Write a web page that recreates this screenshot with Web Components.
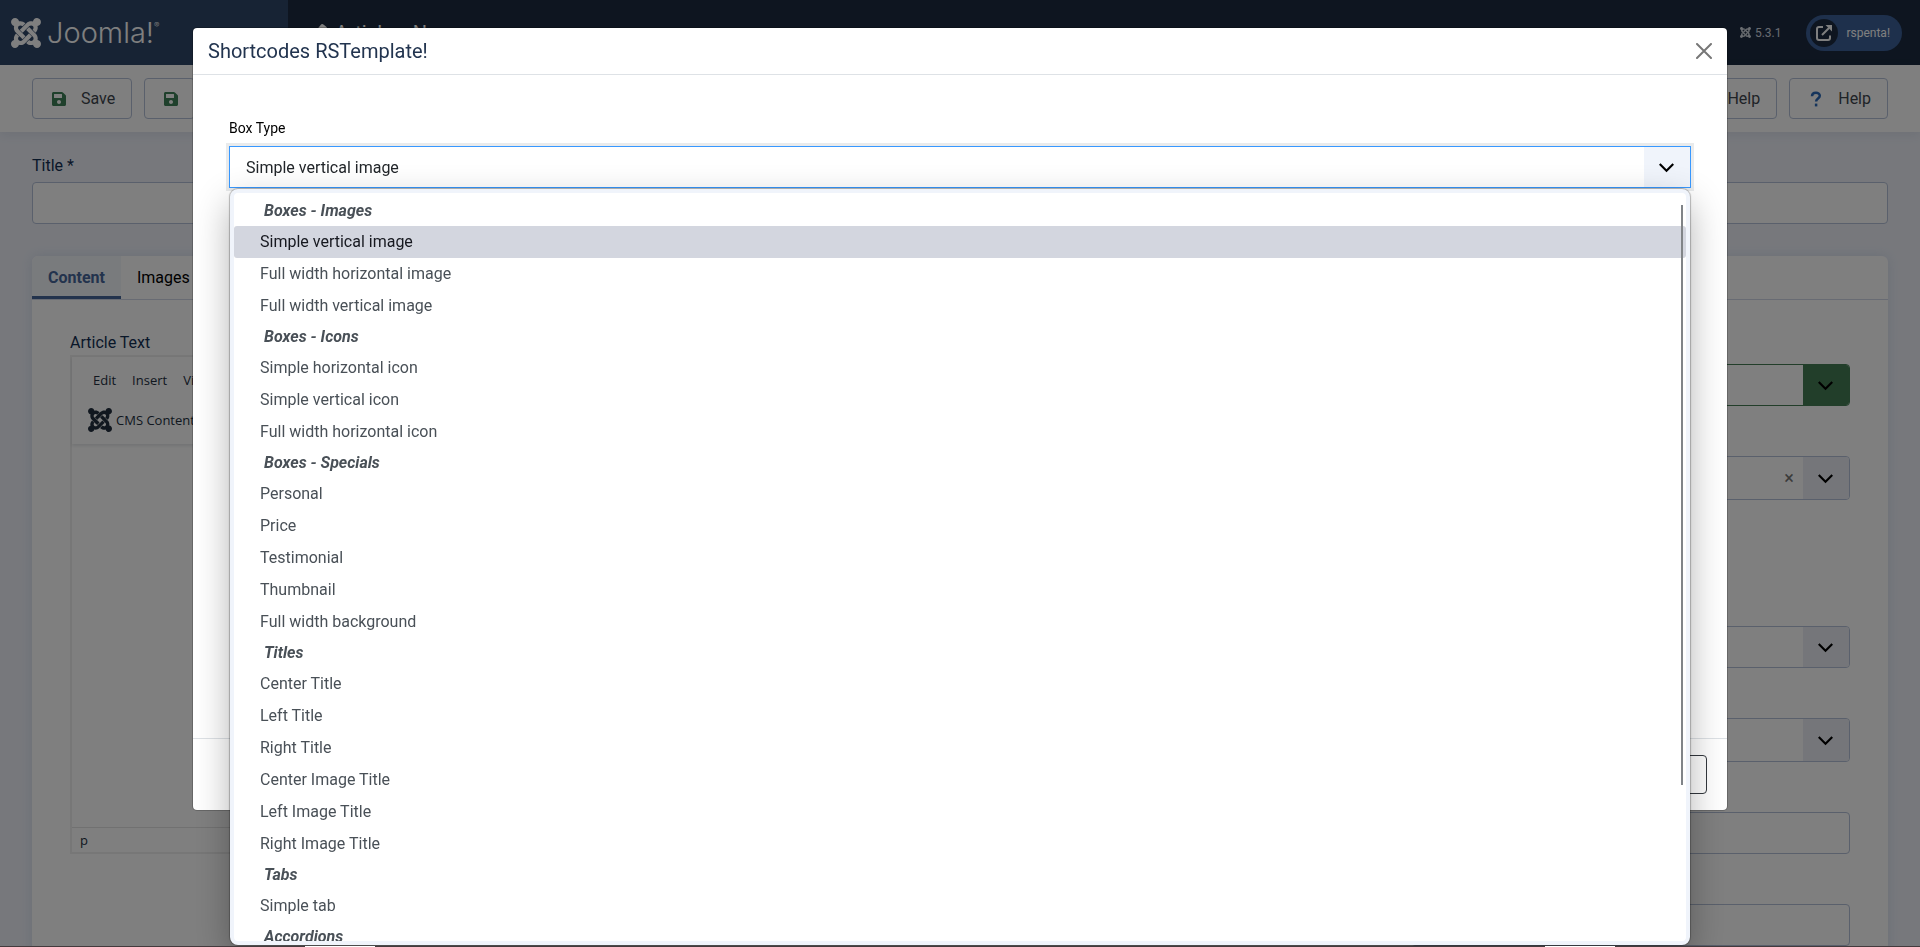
<!DOCTYPE html>
<html lang="en">
<head>
<meta charset="utf-8">
<meta name="viewport" content="width=device-width, initial-scale=1">
<title>Articles: New</title>
<style>
  html, body { height: 100%; }
  body {
    margin: 0;
    overflow: hidden;
    background: #eef1f9;
    color: #132f53;
    font: 16px/24px Roboto, "Liberation Sans", sans-serif;
  }
</style>
</head>
<body>

<admin-header></admin-header>
<admin-toolbar>
  <toolbar-button icon="save">Save</toolbar-button>
  <toolbar-button icon="save" label="Save and close"></toolbar-button>
  <toolbar-button slot="end" icon="help">Help</toolbar-button>
  <toolbar-button slot="end" icon="help">Help</toolbar-button>
</admin-toolbar>
<article-form></article-form>

<modal-window heading="Shortcodes RSTemplate!">
  <shortcode-select></shortcode-select>
</modal-window>
<window-edge></window-edge>

<script>
/**
 * Icons
 *
 * Every icon is a plain svg string that takes the colour of its parent.
 */
const icons = {
  joomla: `<svg viewBox="0 32 448 448" fill="currentColor" aria-hidden="true"><path d="M.6 92.1C.6 58.8 27.4 32 60.4 32c30 0 54.5 21.9 59.2 50.2 32.6-7.6 67.1.6 96.5 30l-44.3 44.3c-20.5-20.5-42.6-16.3-55.4-3.5-14.3 14.3-14.3 37.9 0 52.2l99.5 99.5-44 44.3c-87.7-87.2-49.7-49.7-99.8-99.7-26.8-26.5-35-64.8-24.8-98.9C20.4 144.6.6 120.7.6 92.1zm129.5 116.4l44.3 44.3c10-10 89.7-89.7 99.7-99.8 14.3-14.3 37.6-14.3 51.9 0 12.8 12.8 17 35-3.5 55.4l44 44.3c31.2-31.2 38.5-67.6 28.9-101.2 29.2-4.1 51.9-29.2 51.9-59.5 0-33.2-26.8-60.1-59.8-60.1-30.3 0-55.4 22.5-59.5 51.6-33.8-9.9-71.7-1.5-98.3 25.1-18.3 19.1-71.1 71.5-99.6 99.9zm266.3 152.2c8.2-32.7-.9-68.5-26.3-93.9-11.8-12.2 5 4.7-99.5-99.7l-44.3 44.3 99.7 99.7c14.3 14.3 14.3 37.6 0 51.9-12.8 12.8-35 17-55.4-3.5l-44 44.3c27.6 30.2 68 38.8 102.7 28 5.5 27.4 29.7 48.1 58.9 48.1 33 0 59.8-26.8 59.8-60.1 0-30.2-22.5-55-51.6-59.1zm-84.3-53.1l-44-44.3c-87 86.4-50.4 50.4-99.7 99.8-14.3 14.3-37.6 14.3-51.9 0-13.1-13.4-16.9-35.3 3.2-55.4l-44-44.3c-30.2 30.2-38 65.2-29.5 98.3-26.7 6-46.2 29.9-46.2 58.2C0 453.2 26.8 480 59.8 480c28.6 0 52.5-19.8 58.6-46.7 32.7 8.2 68.5-.6 94.2-26 32.1-32 12.2-12.4 99.5-99.7z"/></svg>`,
  save: `<svg viewBox="0 32 448 448" fill="currentColor" aria-hidden="true"><path d="M433.9 129.9l-83.9-83.9A48 48 0 0 0 316.1 32H48C21.5 32 0 53.5 0 80v352c0 26.5 21.5 48 48 48h352c26.5 0 48-21.5 48-48V163.9a48 48 0 0 0-14.1-34zM224 416c-35.3 0-64-28.7-64-64s28.7-64 64-64 64 28.7 64 64-28.7 64-64 64zm96-304.5V212c0 6.600-5.400 12-12 12H76c-6.600 0-12-5.400-12-12V108c0-6.600 5.400-12 12-12h228.500c3.200 0 6.200 1.300 8.500 3.500l3.500 3.500a12 12 0 0 1 3.500 8.500z"/></svg>`,
  help: `<svg viewBox="0 0 14 16" fill="none" stroke="currentColor" stroke-width="2.500" aria-hidden="true"><path d="M3 5.200C3 .7 10.800.7 10.800 4.800c0 2.700-3.700 2.700-3.700 5.700"/><path d="M7.100 12.600v2.800"/></svg>`,
  pencil: `<svg viewBox="0 0 16 16" fill="currentColor" aria-hidden="true"><path d="M1 11L8.500 1.500a1.700 1.700 0 0 1 2.500-.2l2 1.700a1.700 1.700 0 0 1 .2 2.500L5 14l-4 1z"/></svg>`,
  external: `<svg viewBox="0 0 16 16" fill="none" stroke="currentColor" stroke-width="2" aria-hidden="true"><path d="M7 2H3a2 2 0 0 0-2 2v9a2 2 0 0 0 2 2h9a2 2 0 0 0 2-2v-2.500"/><path d="M6 10l7-7"/><path d="M9.500 0H16v6.500z" fill="currentColor" stroke="none"/></svg>`,
  chevron: `<svg viewBox="0 0 14 9" fill="none" stroke="currentColor" stroke-width="2" aria-hidden="true"><path d="M.7 1L7 7.300 13.300 1"/></svg>`,
  close: `<svg viewBox="0 0 16 16" fill="none" stroke="currentColor" stroke-width="2" stroke-linecap="round" aria-hidden="true"><path d="M1 1l14 14M15 1L1 15"/></svg>`
};

// Base element: puts the markup of a class in an open shadow root
class BaseElement extends HTMLElement {

  connectedCallback() {
    if (this.shadowRoot) return;
    const sdom = this.attachShadow({mode: 'open'});
    sdom.innerHTML = `
      <style>
        *, :host { box-sizing: border-box; }
        button, input, select { font: inherit; color: inherit; margin: 0; }
        svg { display: block; flex: none; }
      </style>
      ${this.render()}
    `;
  }

  render() { return ''; }

}

/**
 * Page header: logo, page title, version and site link
 */
class AdminHeader extends BaseElement {

  render() {
    return `
      <style>
        :host { display: flex; height: 65px; background: #1c2b40; color: #fff; }
        .logo {
          display: flex; align-items: center; gap: 6px;
          width: 288px; padding: 0 11px;
          background: #2e4668; color: #fff; text-decoration: none;
        }
        .logo svg { width: 30px; }
        .name { display: flex; align-items: flex-start; font: 300 29px/32px Inter, "Open Sans", sans-serif; }
        sup { font-size: 8px; line-height: 16px; }
        .title { display: flex; align-items: center; gap: 5px; flex: 1; padding-left: 22px; }
        .title svg { width: 20px; }
        h1 { margin: 0; font-size: 20px; font-weight: 400; }
        .tools { display: flex; align-items: center; gap: 25px; padding-right: 18px; font-size: 12px; }
        .version { display: flex; align-items: center; gap: 4px; color: #d2d8e0; }
        .version svg { width: 11px; }
        .site {
          display: flex; align-items: center; gap: 8px;
          height: 36px; padding: 0 12px 0 4px; border-radius: 18px;
          background: #3c6098; color: #fff; text-decoration: none;
        }
        .site span { display: grid; place-items: center; width: 28px; height: 28px; border-radius: 50%; background: #1c2b40; }
        .site svg { width: 16px; }
      </style>
      <a class="logo" href="#" aria-label="Joomla! dashboard">
        ${icons.joomla}<span class="name">Joomla!<sup>®</sup></span>
      </a>
      <div class="title">${icons.pencil}<h1>Articles: New</h1></div>
      <div class="tools">
        <div class="version">${icons.joomla}5.3.1</div>
        <a class="site" href="#"><span>${icons.external}</span>rspenta!</a>
      </div>
    `;
  }

}

class AdminToolbar extends BaseElement {

  render() {
    return `
      <style>
        :host {
          display: flex; justify-content: space-between;
          padding: 13px 32px; background: #fff;
          box-shadow: 0 3px 10px rgba(20, 50, 100, .08);
        }
        div { display: flex; gap: 12px; }
      </style>
      <div><slot></slot></div>
      <div><slot name="end"></slot></div>
    `;
  }

}

class ToolbarButton extends BaseElement {

  render() {
    const icon = this.getAttribute('icon');
    const label = this.getAttribute('label');
    return `
      <style>
        :host { display: block; }
        button {
          display: flex; align-items: center; gap: 15px;
          height: 41px; padding: 0 16px 0 19px;
          border: 1px solid #b4c0d8; border-radius: 4px;
          background: #fff; color: #40464e;
        }
        svg { width: 14px; }
        .save { color: #3f8158; }
        .help { color: #2a69b8; }
      </style>
      <button type="button" ${label ? `aria-label="${label}"` : ''}>
        <span class="${icon}">${icons[icon]}</span><slot></slot>
      </button>
    `;
  }

}

/**
 * Select box with a chevron at its end
 *
 * tone="success" gives the green box, and clearable adds the remove button.
 */
class FieldSelect extends BaseElement {

  render() {
    const name = this.getAttribute('name');
    return `
      <style>
        :host { display: flex; height: 42px; border: 1px solid #b4c0d8; border-radius: 4px; background: #fff; overflow: hidden; }
        :host([size=tall]) { height: 44px; }
        :host([tone=success]) { border-color: #457d54; }
        select { flex: 1; min-width: 0; border: 0; padding: 0 16px; background: none; appearance: none; outline: 0; }
        button { width: 28px; border: 0; padding: 0; background: none; color: #777; font-size: 18px; }
        .arrow { display: grid; place-items: center; width: 46px; padding: 2px 2px 0 0; background: #eaedf5; color: #000; }
        .arrow svg { width: 15px; }
        :host([tone=success]) .arrow { background: #457d54; }
      </style>
      <select aria-label="${name}"></select>
      ${this.hasAttribute('clearable') ? '<button type="button" aria-label="Remove item">×</button>' : ''}
      <span class="arrow">${icons.chevron}</span>
    `;
  }

}

/**
 * Text editor with its menu, its tool row and its status bar
 */
class ArticleEditor extends BaseElement {

  render() {
    return `
      <style>
        :host {
          display: flex; flex-direction: column; height: 499px;
          border: 2px solid #eee; color: #222f3e;
          font: 13px/20px "Open Sans", "Noto Sans", sans-serif;
        }
        header { padding: 13px 8px 12px; box-shadow: 0 2px 3px rgba(34, 47, 62, .12); }
        nav { display: flex; padding-left: 5px; }
        button { border: 0; padding: 0 8px; background: none; }
        .tools { display: flex; padding-top: 18px; }
        .tools button { display: flex; align-items: center; gap: 4px; }
        .tools svg { width: 24px; }
        .text { flex: 1; outline: 0; }
        footer { padding: 2px 8px; border-top: 1px solid #e3e3e3; }
      </style>
      <header>
        <nav>
          <button type="button">Edit</button>
          <button type="button">Insert</button>
          <button type="button">View</button>
        </nav>
        <div class="tools"><button type="button">${icons.joomla}CMS Content</button></div>
      </header>
      <div class="text" role="textbox" aria-label="Article Text" contenteditable="true"></div>
      <footer>p</footer>
    `;
  }

}

/**
 * Article form: title field, tabs and the two columns of the first tab
 */
class ArticleForm extends BaseElement {

  render() {
    return `
      <style>
        :host { display: block; padding: 22px 32px 0; }
        label { display: block; color: #132f53; }
        input[type=text] {
          display: block; width: 100%; height: 42px; padding: 0 16px;
          border: 1px solid #b4c0d8; border-radius: 4px; background: #fff;
        }
        .title { display: grid; gap: 4px; }
        .card { margin-top: 32px; border-radius: 6px; background: #fff; box-shadow: 0 0 12px rgba(40, 90, 160, .12); }
        .tabs { display: flex; height: 44px; border-bottom: 1px solid #d0d6e6; }
        .tabs button { padding: 3px 16px 0; border: 0; border-bottom: 3px solid transparent; background: none; color: #000; }
        .tabs .active { border-color: #46669a; border-top-left-radius: 6px; background: #f3f6fb; color: #46669a; font-weight: 700; }
        .columns { display: grid; grid-template-columns: 3fr 1fr; gap: 24px; padding: 31px 38px; }
        .side { display: flex; flex-direction: column; gap: 50px; padding-top: 33px; }
        .switch { display: flex; align-items: center; height: 26px; }
      </style>
      <div class="title">
        <label for="title">Title *</label>
        <input type="text" id="title">
      </div>
      <div class="card">
        <div class="tabs" role="tablist">
          <button type="button" role="tab" class="active" aria-selected="true">Content</button>
          <button type="button" role="tab">Images and Links</button>
        </div>
        <div class="columns">
          <div>
            <label>Article Text</label>
            <article-editor></article-editor>
          </div>
          <div class="side">
            <field-select name="Status" tone="success"></field-select>
            <field-select name="Category" size="tall" clearable></field-select>
            <div class="switch"><input type="checkbox" aria-label="Featured"></div>
            <field-select name="Access"></field-select>
            <field-select name="Tags" size="tall"></field-select>
            <input type="text" aria-label="Note">
            <input type="text" aria-label="Version Note">
          </div>
        </div>
      </div>
    `;
  }

}

/**
 * Modal window over a dimmed page
 */
class ModalWindow extends BaseElement {

  render() {
    return `
      <style>
        :host {
          position: fixed; inset: 0; z-index: 10;
          display: flex; justify-content: center; align-items: flex-start;
          padding-top: 27px; background: rgba(0, 0, 0, .5);
        }
        section {
          width: 80%; border: 1px solid rgba(0, 0, 0, .2); border-radius: 5px;
          background: #fff; background-clip: padding-box;
        }
        header { display: flex; justify-content: space-between; align-items: center; padding: 8px 15px; border-bottom: 1px solid #dee2e6; }
        h2 { margin: 0; font-size: 20px; line-height: 30px; font-weight: 400; color: #22344f; }
        header button { padding: 0; border: 0; background: none; color: #777; }
        header svg { width: 16px; }
        .body { min-height: 663px; padding: 42px 36px; }
        footer { display: flex; justify-content: flex-end; padding: 16px 20px; border-top: 1px solid #dee2e6; }
        footer button { width: 80px; height: 39px; border: 1px solid #33383e; border-radius: 4px; background: #fff; }
      </style>
      <section role="dialog" aria-label="${this.getAttribute('heading')}">
        <header>
          <h2>${this.getAttribute('heading')}</h2>
          <button type="button" aria-label="Close">${icons.close}</button>
        </header>
        <div class="body"><slot></slot></div>
        <footer><button type="button" aria-label="Close window"></button></footer>
      </section>
    `;
  }

}

// Groups of the shortcode list
const shortcodes = [
  ['Boxes - Images', ['Simple vertical image', 'Full width horizontal image', 'Full width vertical image']],
  ['Boxes - Icons', ['Simple horizontal icon', 'Simple vertical icon', 'Full width horizontal icon']],
  ['Boxes - Specials', ['Personal', 'Price', 'Testimonial', 'Thumbnail', 'Full width background']],
  ['Titles', ['Center Title', 'Left Title', 'Right Title', 'Center Image Title', 'Left Image Title', 'Right Image Title']],
  ['Tabs', ['Simple tab']],
  ['Accordions', []]
];

/**
 * Box type field with its list open
 */
class ShortcodeSelect extends BaseElement {

  render() {
    const selected = 'Simple vertical image';
    return `
      <style>
        :host { display: block; }
        label { display: block; padding-bottom: 7px; font-size: 14px; line-height: 22px; color: #000; }
        .field { position: relative; }
        .box { display: flex; height: 42px; border: 1px solid #3898ff; box-shadow: 0 0 0 3px #e9ebec; }
        select { flex: 1; min-width: 0; padding: 2px 16px 0; border: 0; outline: 0; background: #fff; color: #22262a; appearance: none; }
        .arrow { display: grid; place-items: center; width: 46px; padding: 2px 2px 0 0; background: #f0f4fb; color: #000; }
        .arrow svg { width: 15px; }
        .list {
          position: absolute; top: 43px; left: 1px; right: 1px;
          height: calc(100vh - 191px);
          border: 4px solid #f0f4fb; border-radius: 8px; background: #fff; color: #495057;
          box-shadow: 0 0 1px 1px rgba(0, 0, 0, .25), 0 14px 36px rgba(0, 0, 0, .3);
        }
        .scroll { height: 100%; padding-top: 3px; overflow: hidden; border-radius: 4px; }
        .group { padding-left: 30px; line-height: 30px; font-weight: 700; font-style: italic; }
        .option { padding-left: 26px; line-height: 32px; border-radius: 3px; }
        .option[aria-selected=true] { background: #d3d6df; color: #16181f; }
        .thumb { position: absolute; top: 12px; right: 3px; bottom: 156px; width: 2px; background: #808488; }
      </style>
      <label for="type">Box Type</label>
      <div class="field">
        <div class="box">
          <select id="type"><option>${selected}</option></select>
          <span class="arrow">${icons.chevron}</span>
        </div>
        <div class="list">
          <div class="scroll" role="listbox" aria-label="Box Type">
            ${shortcodes.map(([group, options]) => `
              <div role="group" aria-label="${group}">
                <div class="group">${group}</div>
                ${options.map(name => `<div class="option" role="option" aria-selected="${name === selected}">${name}</div>`).join('')}
              </div>
            `).join('')}
          </div>
          <span class="thumb"></span>
        </div>
      </div>
    `;
  }

}

// Thin dark line along the bottom of the screen, with two light marks
class WindowEdge extends BaseElement {

  render() {
    return `
      <style>
        :host {
          position: fixed; left: 0; right: 0; bottom: 0; z-index: 20;
          display: flex; justify-content: space-between;
          height: 1px; padding: 0 305px; background: #443a3d;
        }
        span { width: 70px; background: #fff; }
      </style>
      <span></span><span></span>
    `;
  }

}

// Register elements
window.customElements.define('admin-header', AdminHeader);
window.customElements.define('admin-toolbar', AdminToolbar);
window.customElements.define('toolbar-button', ToolbarButton);
window.customElements.define('field-select', FieldSelect);
window.customElements.define('article-editor', ArticleEditor);
window.customElements.define('article-form', ArticleForm);
window.customElements.define('shortcode-select', ShortcodeSelect);
window.customElements.define('modal-window', ModalWindow);
window.customElements.define('window-edge', WindowEdge);
</script>
</body>
</html>
